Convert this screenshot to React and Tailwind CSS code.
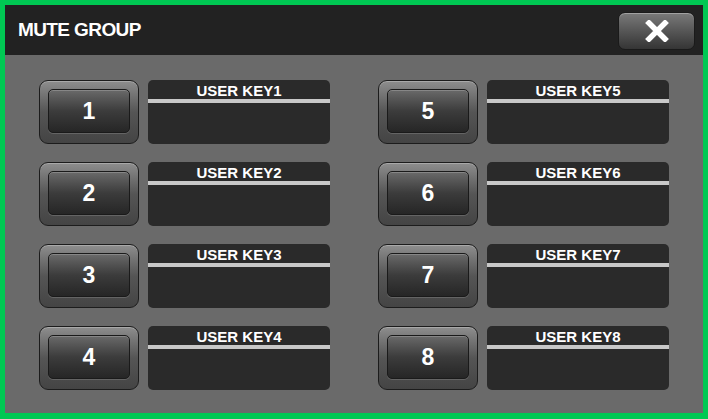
import React from 'react';

const keys = [1, 5, 2, 6, 3, 7, 4, 8];

function KeyButton({ n }) {
  return (
    <div className="w-[100px] h-[64px] rounded-[9px] border border-[#1c1c1c] bg-gradient-to-b from-[#8e8e8e] via-[#555555] to-[#444444] shadow-[inset_0_1px_0_rgba(255,255,255,0.25)] pl-[8px] pt-[8px]">
      <div className="w-[82px] h-[44px] rounded-[5px] border border-[#1a1a1a] bg-gradient-to-b from-[#6a6a6a] via-[#3c3c3c] to-[#262626] shadow-[inset_0_1px_0_rgba(255,255,255,0.2),0_1px_0_rgba(255,255,255,0.15)] flex items-center justify-center">
        <span className="text-white font-bold text-[23px] leading-none">{n}</span>
      </div>
    </div>
  );
}

function KeyLabel({ n }) {
  return (
    <div className="w-[182px] h-[64px] rounded-[5px] bg-[#2a2a2a] overflow-hidden flex flex-col">
      <div className="h-[19px] flex items-center justify-center text-white font-bold text-[15px] leading-none pt-[1px]">
        USER KEY{n}
      </div>
      <div className="h-[4px] bg-[#c8c8c8]" />
    </div>
  );
}

export default function App() {
  return (
    <div
      className="w-[708px] h-[419px] bg-[#00c853] pt-[5px] pl-[5px] pr-[5px] pb-[6px]"
      style={{ fontFamily: '"Liberation Sans", Arial, sans-serif' }}
    >
      <div className="w-full h-full flex flex-col">
        {/* Header */}
        <div className="h-[50px] bg-[#222222] flex items-center justify-between pl-[13px] pr-[8px]">
          <span className="text-white font-bold text-[19px] tracking-[-0.6px]">MUTE GROUP</span>
          <button className="w-[77px] h-[38px] mt-[2px] rounded-[7px] border border-[#1a1a1a] bg-gradient-to-b from-[#7a7a7a] to-[#353535] shadow-[inset_0_1px_0_rgba(255,255,255,0.3)] flex items-center justify-center">
            <svg width="24" height="22" viewBox="0 0 24 22">
              <path d="M4 3 L20 19 M20 3 L4 19" stroke="white" strokeWidth="5.5" strokeLinecap="square" />
            </svg>
          </button>
        </div>

        {/* Body */}
        <div className="flex-1 bg-[#6a6a6a] pt-[25px] pl-[34px]">
          <div className="grid grid-cols-[291px_291px] gap-x-[48px] gap-y-[18px]">
            {keys.map((n) => (
              <div key={n} className="flex gap-[9px]">
                <KeyButton n={n} />
                <KeyLabel n={n} />
              </div>
            ))}
          </div>
        </div>
      </div>
    </div>
  );
}
